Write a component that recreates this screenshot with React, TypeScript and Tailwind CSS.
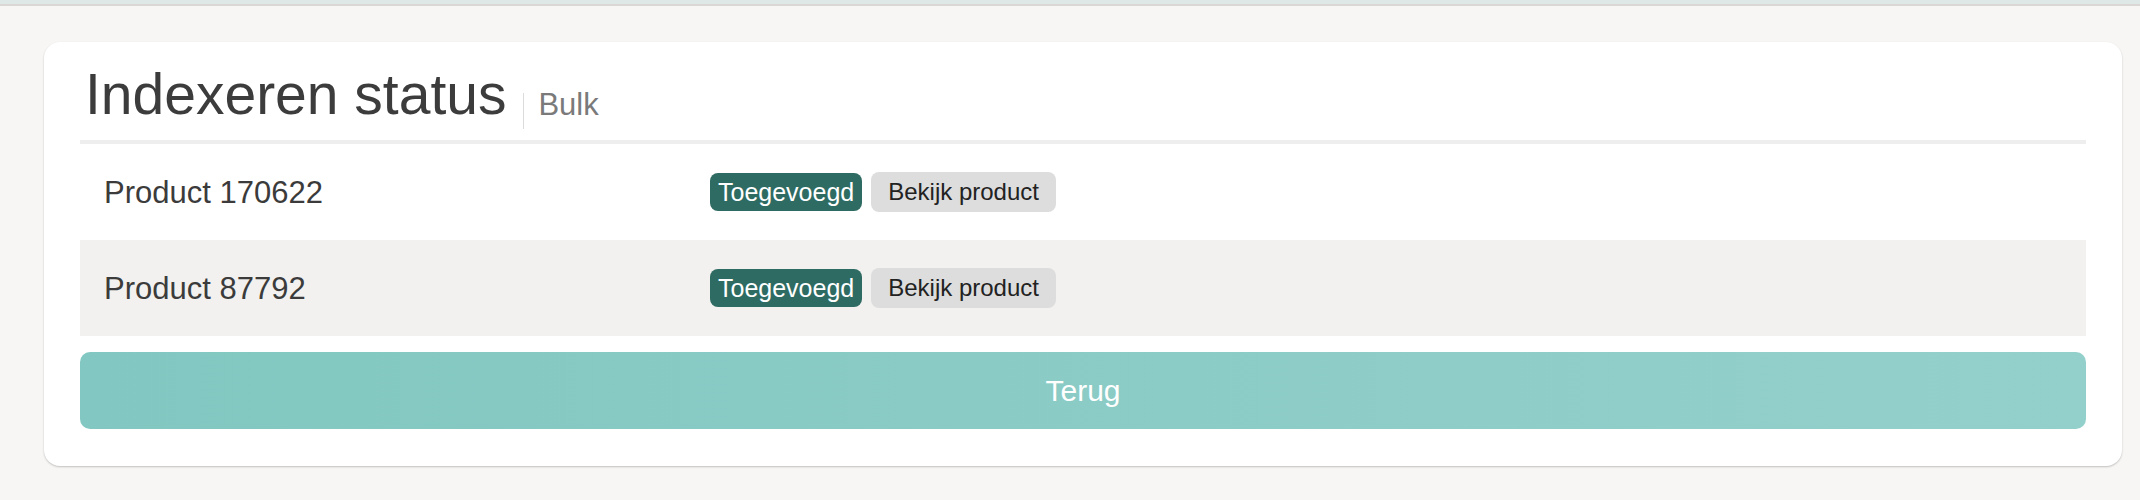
import React from 'react';

const rows = [
  { id: 170622 },
  { id: 87792 },
];

export default function App() {
  return (
    <div className="min-h-screen bg-[#f7f6f4] font-['Liberation_Sans',Arial,sans-serif]">
      {/* top strip */}
      <div className="h-[4px] bg-[#dde8e7]" />
      <div className="h-[2px] bg-[#dbd7d5]" />

      <div className="ml-[44px] mr-[18px] mt-[36px] rounded-2xl bg-white px-[36px] pt-[24px] pb-[37px] shadow-[0_1px_2px_rgba(0,0,0,0.22)]">
        {/* Heading */}
        <div className="flex items-end border-b-4 border-[#eeeeee] pb-[17px] pl-[5px]">
          <h1 className="text-[57px] leading-none text-[#3c3c3c]">Indexeren status</h1>
          <div className="ml-[17px] mb-[-6px] h-[36px] w-px bg-[#dcdcdc]" />
          <span className="ml-[14px] mb-[3px] text-[31px] leading-none text-[#7a7a7a]">Bulk</span>
        </div>

        {/* Rows */}
        <div>
          {rows.map((r, i) => (
            <div
              key={r.id}
              className={`flex h-[96px] items-center ${i % 2 === 1 ? 'bg-[#f2f1ef]' : 'bg-white'}`}
            >
              <div className="w-[630px] pl-[24px] text-[31px] leading-none text-[#3b3b3b]">
                Product {r.id}
              </div>
              <div className="flex items-center gap-[9px]">
                <span className="h-[38px] rounded-lg bg-[#2e6b62] px-[8px] text-[25px] leading-[38px] text-white">
                  Toegevoegd
                </span>
                <button className="h-[40px] rounded-lg bg-[#dddddd] px-[17px] text-[24px] leading-[40px] text-[#222222]">
                  Bekijk product
                </button>
              </div>
            </div>
          ))}
        </div>

        {/* Back button */}
        <button className="mt-[16px] flex h-[77px] w-full items-center justify-center rounded-[10px] bg-gradient-to-r from-[#82c7c1] to-[#94d0cb] text-[30px] text-white">
          Terug
        </button>
      </div>
    </div>
  );
}
